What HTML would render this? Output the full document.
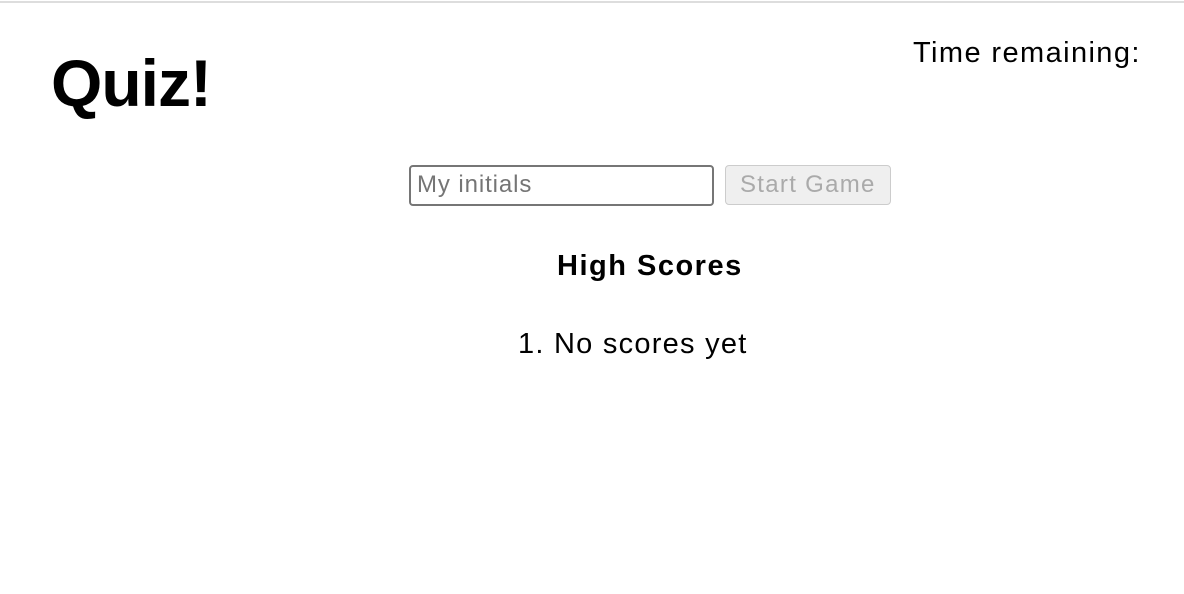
<!DOCTYPE html>
<html><head><style>
body{margin:0;width:1184px;height:594px;background:#fff;font-family:"Liberation Sans",Arial,sans-serif;position:relative;overflow:hidden}
.top{position:absolute;left:0;top:1px;width:1184px;height:2px;background:#ddd}
.t{position:absolute;white-space:nowrap;color:#000}
</style></head><body>
<div class="top"></div>
<div class="t" style="left:51px;top:43px;font-size:66px;font-weight:bold;line-height:80px;letter-spacing:-1px">Quiz!</div>
<div class="t" style="left:913px;top:35px;font-size:29px;line-height:36px;letter-spacing:1.4px">Time remaining:</div>
<div style="position:absolute;left:409px;top:165px;border:2px solid #767676;border-radius:4px;width:301px;height:37px"></div>
<div class="t" style="left:417px;top:169px;font-size:24px;line-height:32px;color:#757575;letter-spacing:0.9px">My initials</div>
<div style="position:absolute;left:725px;top:165px;width:164px;height:38px;border:1px solid #ccc;border-radius:4px;background:#efefef"></div>
<div class="t" style="left:740px;top:169px;font-size:24px;line-height:32px;color:#aaa;letter-spacing:1.3px">Start Game</div>
<div class="t" style="left:557px;top:248px;font-size:29px;font-weight:bold;line-height:36px;letter-spacing:1.5px">High Scores</div>
<div class="t" style="left:518px;top:326px;font-size:29px;line-height:36px;letter-spacing:1.25px">1. No scores yet</div>
</body></html>
